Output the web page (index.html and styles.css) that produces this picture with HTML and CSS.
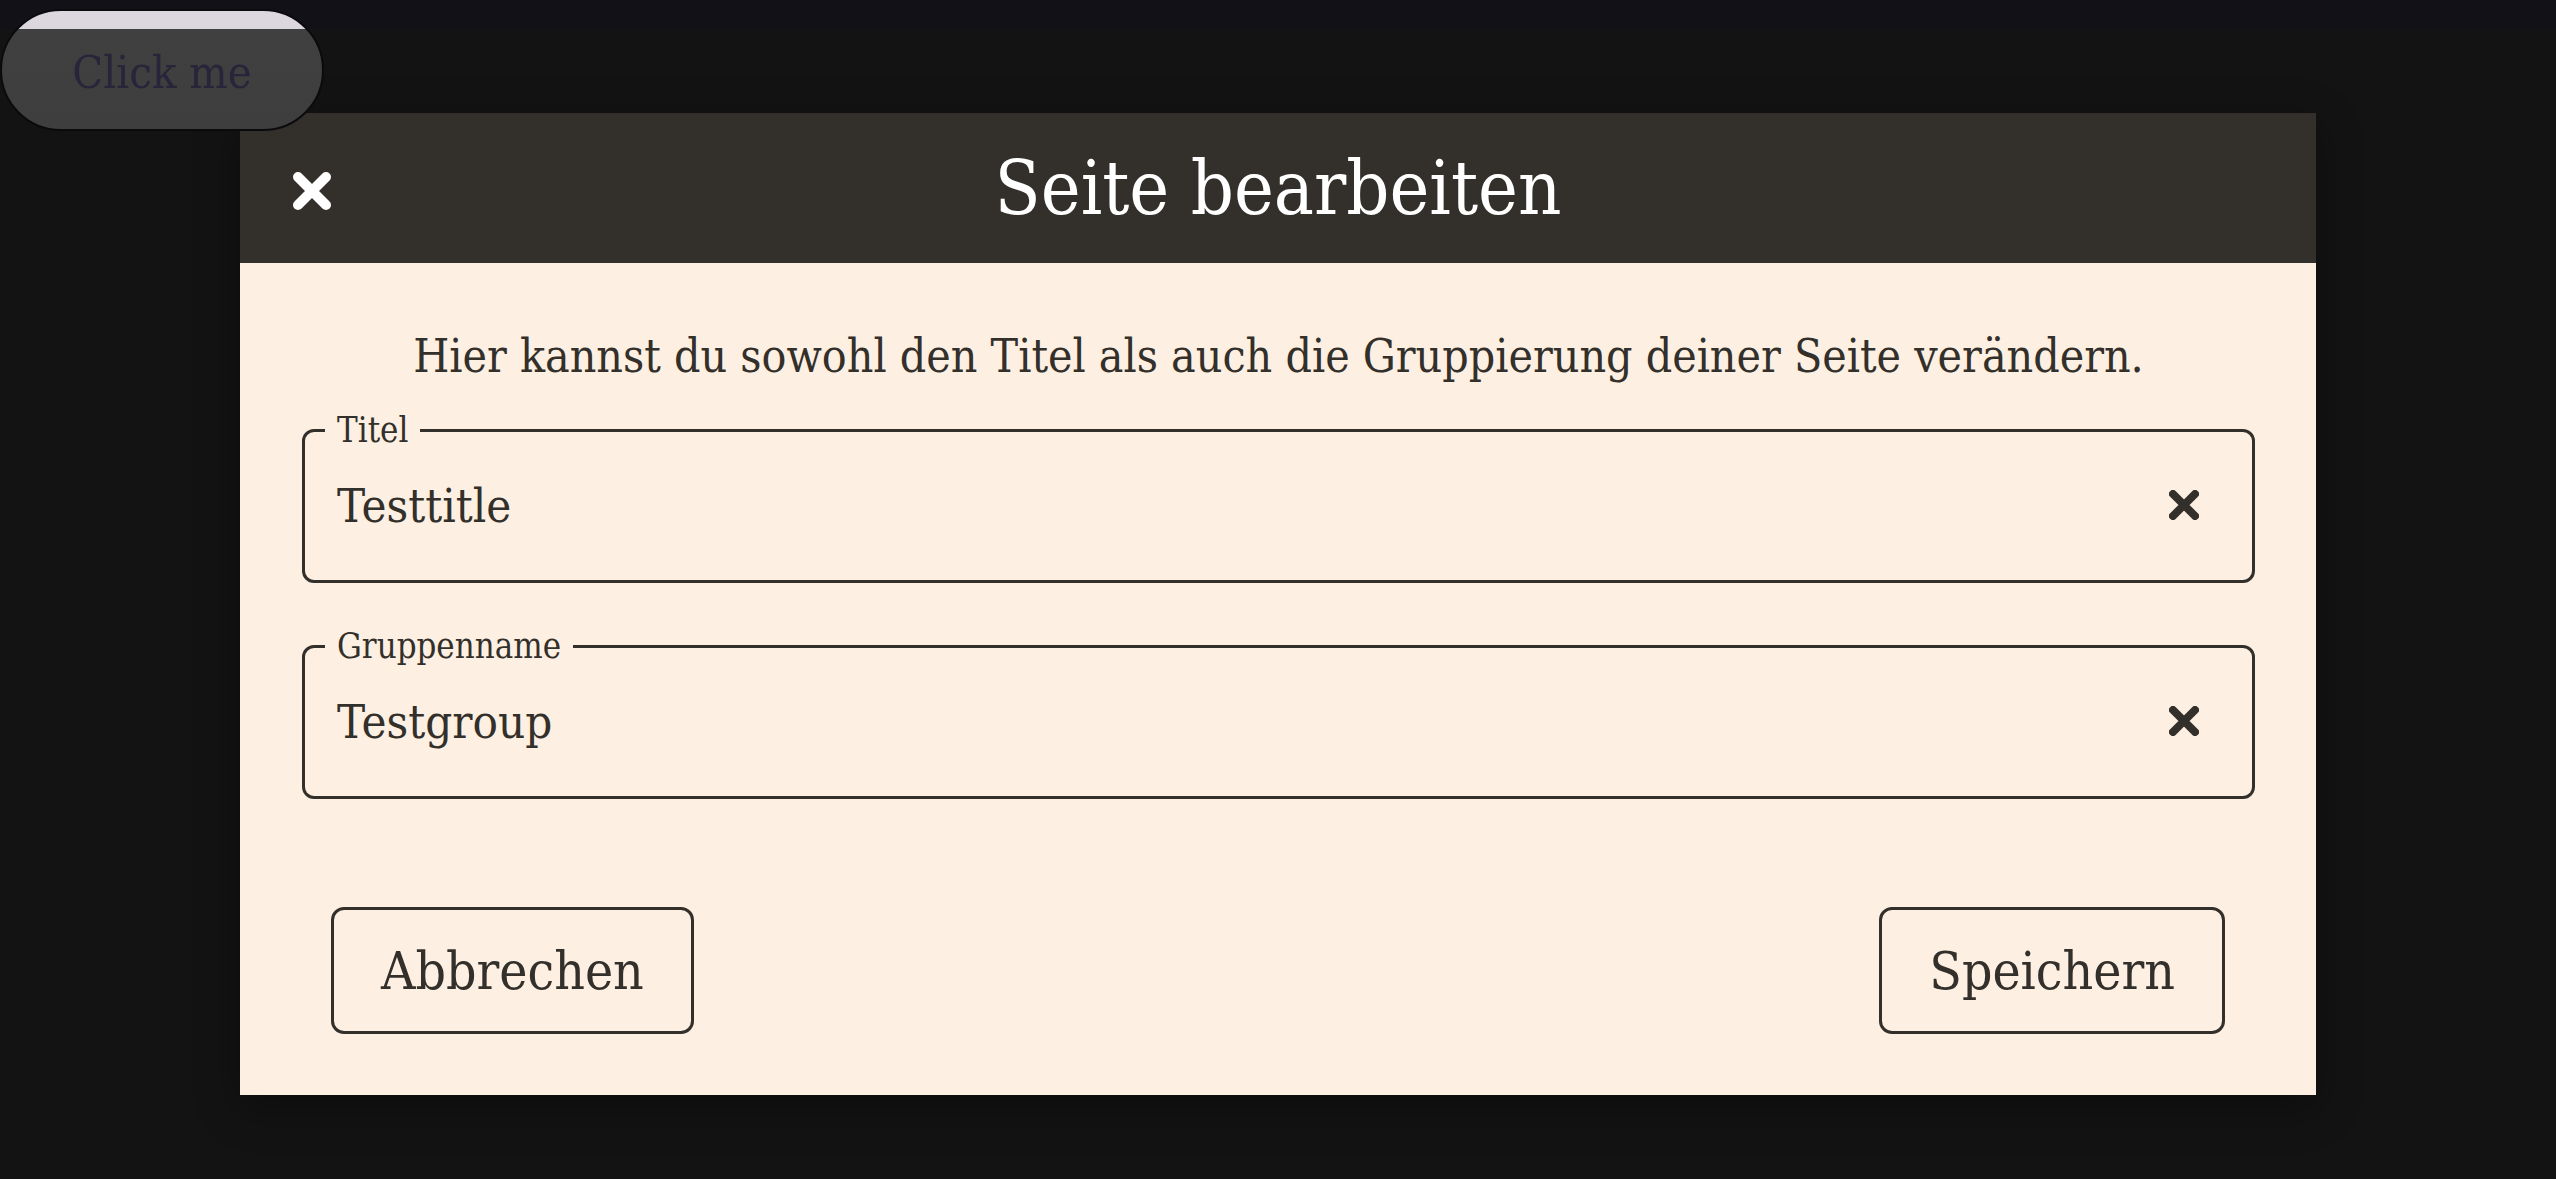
FILE: index.html
```html
<!DOCTYPE html>
<html lang="de">
<head>
<meta charset="utf-8">
<title>Seite bearbeiten</title>
<link rel="stylesheet" href="styles.css">
</head>
<body>
<button class="trigger" type="button">Click me</button>
<div class="backdrop">
  <div class="dialog" role="dialog" aria-labelledby="dlg-title">
    <header class="dialog-header">
      <button class="close-btn" type="button" aria-label="Schließen">
        <svg viewBox="0 0 38 38" width="38" height="38"><path d="M5 5 L33 33 M33 5 L5 33"/></svg>
      </button>
      <h1 class="dialog-title" id="dlg-title">Seite bearbeiten</h1>
      <span class="header-spacer"></span>
    </header>
    <div class="dialog-body">
      <p class="intro">Hier kannst du sowohl den Titel als auch die Gruppierung deiner Seite verändern.</p>
      <fieldset class="field">
        <legend class="field-label">Titel</legend>
        <div class="field-row">
          <input class="field-input" type="text" value="Testtitle">
          <button class="clear-btn" type="button" aria-label="Leeren">
            <svg viewBox="0 0 30 30" width="30" height="30"><path d="M4 4 L26 26 M26 4 L4 26"/></svg>
          </button>
        </div>
      </fieldset>
      <fieldset class="field">
        <legend class="field-label">Gruppenname</legend>
        <div class="field-row">
          <input class="field-input" type="text" value="Testgroup">
          <button class="clear-btn" type="button" aria-label="Leeren">
            <svg viewBox="0 0 30 30" width="30" height="30"><path d="M4 4 L26 26 M26 4 L4 26"/></svg>
          </button>
        </div>
      </fieldset>
      <div class="actions">
        <button class="btn" type="button">Abbrechen</button>
        <button class="btn" type="button">Speichern</button>
      </div>
    </div>
  </div>
</div>
</body>
</html>
```
FILE: styles.css
```css
html, body {
  margin: 0;
  padding: 0;
}
body {
  background: #121117;
  font-family: "DejaVu Serif Condensed", "DejaVu Serif", serif;
  font-stretch: semi-condensed;
  color: #332f2a;
  height: 1179px;
  overflow: hidden;
}
button, input {
  font-family: inherit;
  font-stretch: inherit;
}

.trigger {
  position: relative;
  z-index: 2;
  display: flex;
  align-items: center;
  justify-content: center;
  margin: 9px 0 0 0;
  width: 324px;
  height: 122px;
  padding: 4px 0 0 0;
  border: 2px solid #0b0b0e;
  border-radius: 62px;
  background: linear-gradient(to bottom, #dcd6de 0, #dcd6de 18px, #404040 18px, #3e3e3e 100%);
  color: #28243a;
  font-size: 45px;
  cursor: pointer;
}

.backdrop {
  position: fixed;
  top: 29px;
  left: 0;
  right: 0;
  bottom: 0;
  background: #131313;
  display: flex;
  align-items: center;
  justify-content: center;
  z-index: 1;
}

.dialog {
  width: 2076px;
  background: #fdefe2;
  box-shadow: 0 12px 40px rgba(0, 0, 0, 0.35);
  display: flex;
  flex-direction: column;
}

.dialog-header {
  height: 150px;
  background: #332f2a;
  display: grid;
  grid-template-columns: 1fr auto 1fr;
  align-items: center;
  padding: 0 40px;
}
.close-btn {
  justify-self: start;
  width: 64px;
  height: 64px;
  margin-top: 6px;
  padding: 0;
  border: 0;
  background: transparent;
  display: flex;
  align-items: center;
  justify-content: center;
  cursor: pointer;
}
.close-btn svg path {
  fill: none;
  stroke: #ffffff;
  stroke-width: 10;
  stroke-linecap: round;
}
.dialog-title {
  margin: 0;
  font-size: 75px;
  line-height: 1;
  font-weight: normal;
  color: #ffffff;
  white-space: nowrap;
}

.dialog-body {
  display: flex;
  flex-direction: column;
  padding: 66px 61px 61px 62px;
}
.intro {
  margin: 0 0 31px 0;
  text-align: center;
  font-size: 46px;
  line-height: 54px;
}

.field {
  margin: 0;
  padding: 0 20px 17px 20px;
  border: 3px solid #332f2a;
  border-radius: 12px;
  min-inline-size: 0;
}
.field + .field {
  margin-top: 47px;
}
.field-label {
  padding: 0 12px;
  font-size: 34.5px;
  line-height: 33px;
}
.field-row {
  height: 116px;
  display: flex;
  align-items: center;
}
.field-input {
  flex: 1;
  min-width: 0;
  border: 0;
  outline: 0;
  background: transparent;
  padding: 0 0 0 12px;
  margin: 0;
  font-size: 47px;
  color: #332f2a;
}
.clear-btn {
  width: 60px;
  height: 60px;
  margin-right: 18px;
  padding: 0;
  border: 0;
  background: transparent;
  display: flex;
  align-items: center;
  justify-content: center;
  cursor: pointer;
}
.clear-btn svg path {
  fill: none;
  stroke: #332f2a;
  stroke-width: 8;
  stroke-linecap: round;
}

.actions {
  margin-top: 108px;
  padding: 0 30px 0 29px;
  display: flex;
  justify-content: space-between;
}
.btn {
  height: 127px;
  padding: 0 47px;
  border: 3px solid #332f2a;
  border-radius: 13px;
  background: transparent;
  color: #332f2a;
  font-size: 53px;
  cursor: pointer;
}
```
